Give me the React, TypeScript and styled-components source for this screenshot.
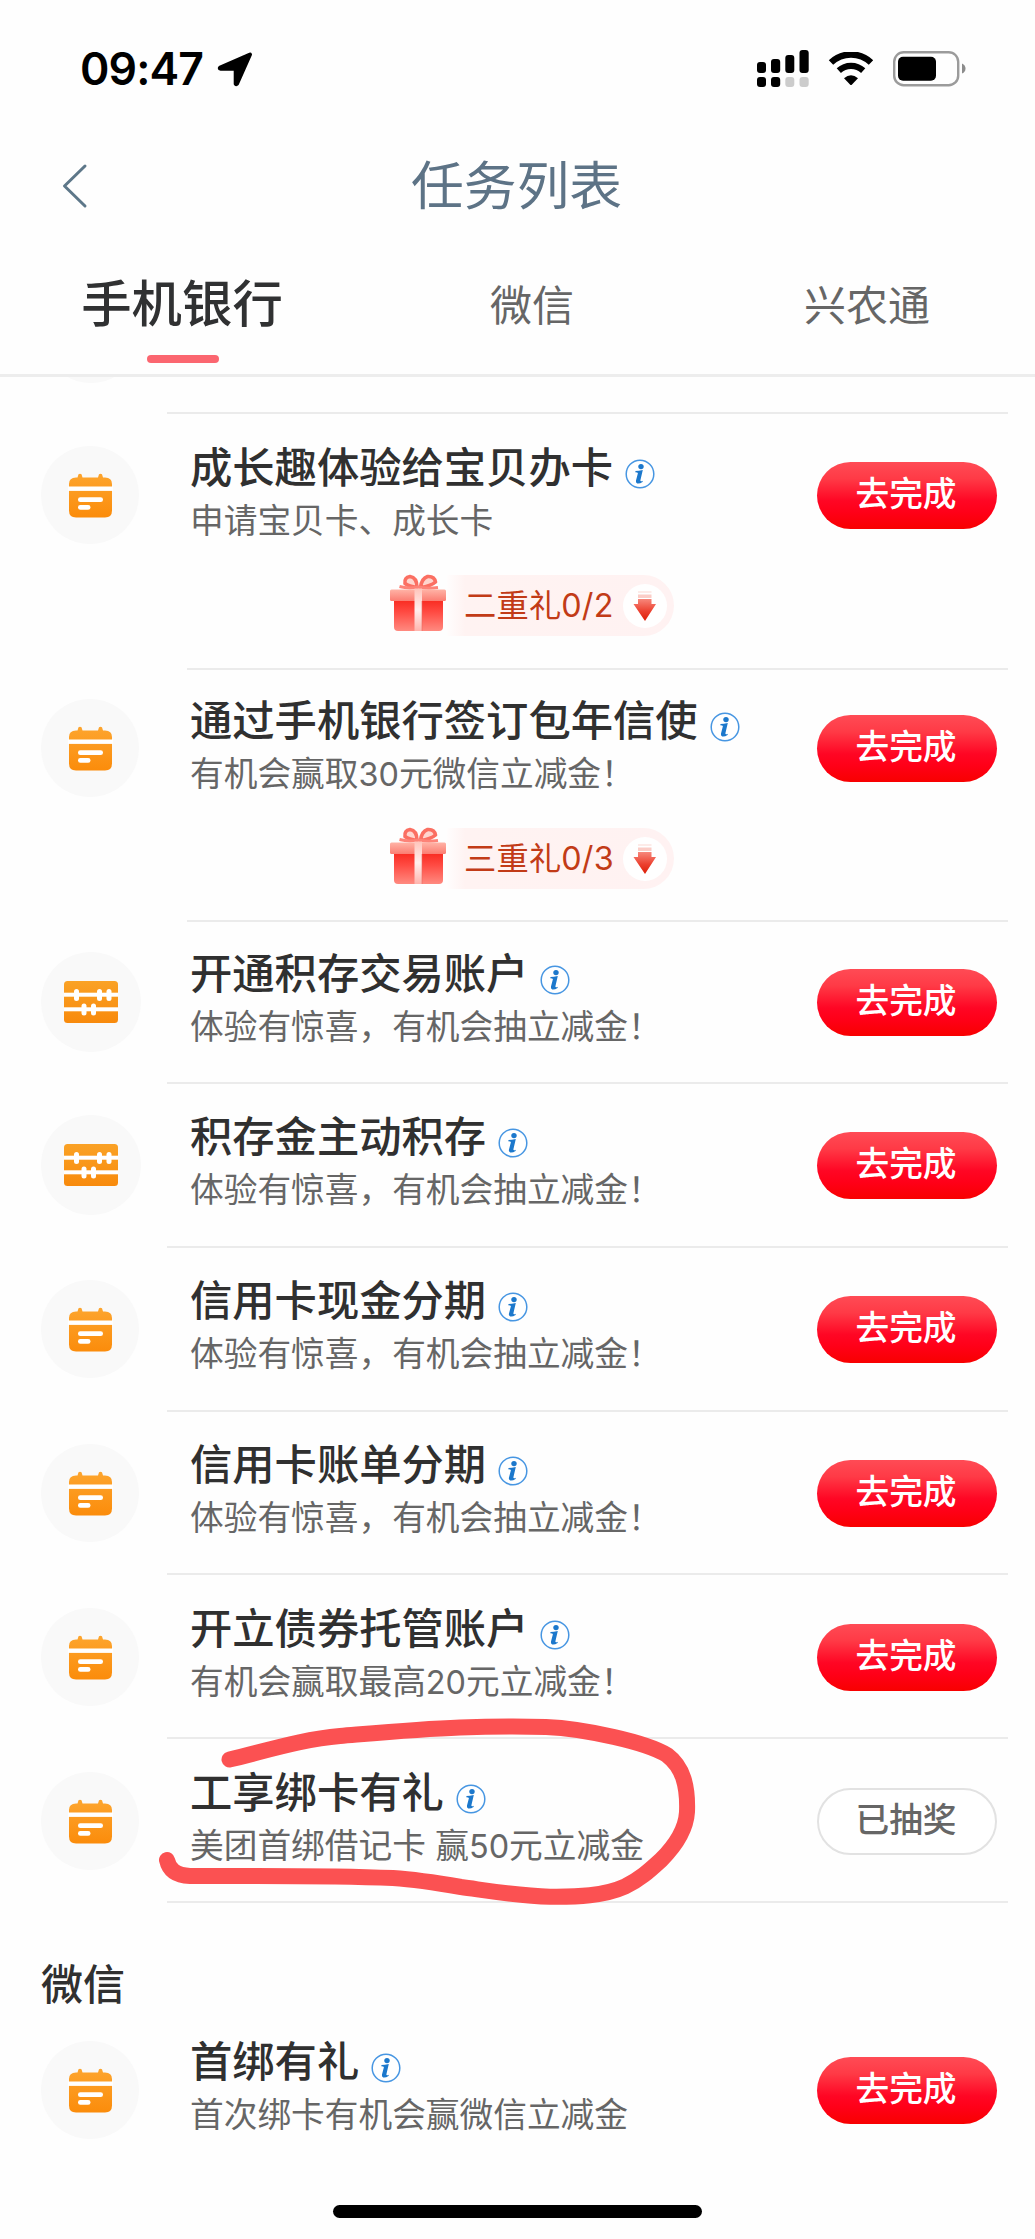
import React from "react";
import styled, { createGlobalStyle } from "styled-components";

const GlobalStyle = createGlobalStyle`
  * { box-sizing: border-box; }
  body {
    margin: 0;
    background: #fefefe;
    font-family: Inter, "Noto Sans CJK SC", sans-serif;
    -webkit-font-smoothing: antialiased;
  }
`;

const Screen = styled.div`
  width: 1035px;
  height: 2239px;
  display: flex;
  flex-direction: column;
  background: #fefefe;
  overflow: hidden;
`;

const StatusBar = styled.header`
  height: 136px;
  display: flex;
  justify-content: space-between;
  padding: 0 69px 0 80px;
`;

const StatusLeft = styled.div`
  display: flex;
  align-items: center;
  height: 138px;
  gap: 14px;
`;

const Clock = styled.span`
  font-size: 44.6px;
  font-weight: 600;
  line-height: 54px;
  letter-spacing: -0.9px;
  color: #000;
`;

const StatusRight = styled.div`
  display: flex;
  align-items: center;
  height: 138px;
`;

const NavBar = styled.nav`
  height: 100px;
  display: grid;
  grid-template-columns: 120px 1fr 120px;
  align-items: center;
`;

const BackButton = styled.button`
  border: 0;
  background: none;
  padding: 0 0 0 62px;
  height: 46px;
  display: flex;
`;

const NavTitle = styled.h1`
  margin: 0;
  padding-right: 2px;
  text-align: center;
  font-size: 52.8px;
  line-height: 70px;
  font-weight: 400;
  color: #5d7386;
`;

const Tabs = styled.div`
  height: 138px;
  flex: none;
  display: grid;
  grid-template-columns: 202px 1fr 126px;
  padding: 31px 105px 0 81px;
`;

const Tab = styled.div<{ $active?: boolean; $nudge?: number }>`
  display: flex;
  flex-direction: column;
  align-items: center;
  padding-right: ${(p) => p.$nudge ?? 0}px;
  white-space: nowrap;
  font-size: ${(p) => (p.$active ? 50.4 : 42)}px;
  font-weight: ${(p) => (p.$active ? 500 : 400)};
  line-height: ${(p) => (p.$active ? 74 : 77)}px;
  color: ${(p) => (p.$active ? "#303132" : "#666")};
`;

const TabMark = styled.span`
  width: 72px;
  height: 8px;
  margin: 14px 0 0 2px;
  border-radius: 4px;
  background: #fb6670;
`;

const List = styled.main`
  border-top: 3px solid #ededed;
  display: flex;
  flex-direction: column;
`;

const ScrolledRow = styled.div`
  height: 35px;
  padding-left: 42px;
  overflow: hidden;
  display: flex;
  align-items: flex-start;
`;

const IconDisc = styled.div<{ $size: number }>`
  width: ${(p) => p.$size}px;
  height: ${(p) => p.$size}px;
  flex: none;
  border-radius: 50%;
  background: #f9f9f9;
  display: flex;
  align-items: center;
  justify-content: center;
`;

const ScrolledDisc = styled(IconDisc)`
  margin-top: -92px;
`;

const Divider = styled.hr<{ $inset: number }>`
  width: ${(p) => 1008 - p.$inset}px;
  height: 2px;
  margin: 0 0 0 ${(p) => p.$inset}px;
  border: 0;
  flex: none;
  background: #ebebeb;
`;

const Row = styled.section<{ $height: number; $lead: number }>`
  position: relative;
  height: ${(p) => p.$height}px;
  padding: ${(p) => p.$lead}px 38px 0 41px;
  display: flex;
  flex-direction: column;
`;

const RowMain = styled.div<{ $shift: number }>`
  height: 112px;
  display: grid;
  grid-template-columns: 149px 1fr 180px;
  align-items: start;
  & > :first-child,
  & > :last-child {
    align-self: center;
    margin-top: ${(p) => p.$shift}px;
  }
`;

const Copy = styled.div`
  display: flex;
  flex-direction: column;
  white-space: nowrap;
`;

const TitleLine = styled.div`
  height: 56px;
  display: flex;
  align-items: center;
  gap: 12px;
  svg {
    margin-top: 13px;
  }
`;

const Title = styled.h2`
  margin: 0;
  padding-top: 1px;
  font-size: 42.3px;
  line-height: 56px;
  font-weight: 500;
  color: #303030;
`;

const Subtitle = styled.p`
  margin: 0;
  font-size: 33.7px;
  line-height: 52px;
  color: #666;
`;

const Digits = styled.span`
  font-size: 32.4px;
`;

const Action = styled.button<{ $done?: boolean }>`
  width: 180px;
  height: 67px;
  padding: 0 2px 2px 0;
  border-radius: 34px;
  font-family: inherit;
  font-size: 33.7px;
  line-height: 50px;
  font-weight: 500;
  color: ${(p) => (p.$done ? "#666" : "#fff")};
  border: ${(p) => (p.$done ? "2.5px solid #e2e2e2" : "0")};
  background: ${(p) =>
    p.$done
      ? "#fff"
      : "linear-gradient(180deg, #ff4b55 0%, #ff3a46 25%, #ff0624 58%, #ff0018 75%, #f80000 100%)"};
`;

const GiftPill = styled.div`
  margin: 24px 0 0 348px;
  width: 285px;
  height: 61px;
  display: flex;
  align-items: center;
  svg {
    flex: none;
  }
`;

const GiftSvg = styled.svg`
  margin-top: -3px;
`;

const PillBody = styled.div`
  height: 61px;
  flex: 1;
  display: flex;
  align-items: center;
  justify-content: space-between;
  padding: 0 7px 0 17px;
  border-radius: 0 31px 31px 0;
  background: linear-gradient(90deg, #fffdfd 0, #fff3f2 18px, #fff2f2 100%);
`;

const PillText = styled.span`
  font-size: 32.3px;
  line-height: 60px;
  letter-spacing: 0.15px;
  white-space: nowrap;
  color: #c23b17;
`;

const ArrowDisc = styled.span`
  width: 44px;
  height: 44px;
  border-radius: 50%;
  background: #fff;
  display: flex;
  align-items: center;
  justify-content: center;
`;

const Marker = styled.svg`
  position: absolute;
  left: 150px;
  top: -34px;
  pointer-events: none;
  z-index: 2;
`;

const SectionTitle = styled.h3`
  margin: 0;
  height: 106px;
  padding: 51px 0 0 41px;
  font-size: 42px;
  line-height: 62px;
  font-weight: 500;
  color: #303030;
`;

const HomeIndicator = styled.div`
  width: 369px;
  height: 13px;
  margin: auto auto 21px 333px;
  border-radius: 7px;
  background: #000;
`;

const LocationIcon = () => (
  <svg width="36" height="36" viewBox="0 0 36 36">
    <path
      d="M33 3.500 20 32.800Q19.300 33.600 18.700 32.800V17.700H3.500Q2.200 17.300 3.200 16.500Z"
      fill="#000"
      stroke="#000"
      strokeWidth="4"
      strokeLinejoin="round"
    />
  </svg>
);

const SignalIcon = () => (
  <svg width="53" height="38" viewBox="0 0 53 38">
    <rect x="0" y="12" width="9" height="11" rx="3" />
    <rect x="14" y="9" width="9.200" height="14" rx="3" />
    <rect x="28.300" y="5" width="9" height="18" rx="3" />
    <rect x="42.500" y="0" width="9.200" height="23" rx="3" />
    <rect x="0" y="27" width="9" height="10" rx="3" />
    <rect x="14" y="27" width="9.200" height="10" rx="3" />
    <rect x="28.300" y="27" width="9" height="10" rx="3" fill="#ccc" />
    <rect x="42.500" y="27" width="9.200" height="10" rx="3" fill="#ccc" />
  </svg>
);

const WifiSvg = styled.svg`
  margin-left: 18px;
`;

const WifiIcon = () => (
  <WifiSvg width="46" height="34" viewBox="0 0 46 34">
    <path d="M3 10.500a29 29 0 0 1 40 0" fill="none" stroke="#000" strokeWidth="6.400" />
    <path d="M10.800 18.600a18 18 0 0 1 24.400 0" fill="none" stroke="#000" strokeWidth="6.200" />
    <path d="M16 26.200Q23 20.300 30 26.200L24 32.600Q23 33.600 22 32.600Z" />
  </WifiSvg>
);

const BatterySvg = styled.svg`
  margin-left: 19px;
`;

const BatteryIcon = () => (
  <BatterySvg width="73" height="36" viewBox="0 0 73 36">
    <rect x="1.200" y="1.200" width="64" height="33" rx="9.500" fill="none" stroke="#9b9b9b" strokeWidth="2.400" />
    <rect x="5" y="5.700" width="38" height="24" rx="5" />
    <path d="M69 12.500q3.500 1.500 3.500 5t-3.500 5Z" fill="#8c8c8c" />
  </BatterySvg>
);

const CalendarIcon = () => (
  <svg width="45" height="45" viewBox="0 0 45 45">
    <defs>
      <linearGradient id="cal" x1="0" y1="0" x2="0" y2="1">
        <stop offset="0" stopColor="#fda52e" />
        <stop offset="1" stopColor="#fb8c0b" />
      </linearGradient>
    </defs>
    <path
      d="M9.500 4.500 10.500 1.300Q12 0 13.500 1.300L14.500 4.500H30L31 1.300Q32.500 0 34 1.300L35 4.500H37Q44 4.500 44 11V37.500Q44 44.500 37 44.500H8Q1 44.500 1 37.500V11Q1 4.500 8 4.500Z"
      fill="url(#cal)"
    />
    <rect x="0" y="13.500" width="45" height="4.400" fill="#fff" />
    <rect x="10" y="24.300" width="25" height="4.700" rx="2.300" fill="#fff" />
    <rect x="10" y="32" width="12.500" height="4.700" rx="2.300" fill="#fff" />
  </svg>
);

const AbacusIcon = () => (
  <svg width="54" height="42" viewBox="0 0 54 42">
    <defs>
      <linearGradient id="aba" x1="0" y1="0" x2="0" y2="1">
        <stop offset="0" stopColor="#faa226" />
        <stop offset="1" stopColor="#f88a0c" />
      </linearGradient>
    </defs>
    <rect width="54" height="42" rx="3.500" fill="url(#aba)" />
    <g fill="#fff">
      <rect y="11.700" width="54" height="4" />
      <rect y="26.300" width="54" height="4" />
      <rect x="10" y="8" width="5" height="12" rx="2.500" />
      <rect x="33" y="8" width="5" height="12" rx="2.500" />
      <rect x="42.500" y="8" width="5" height="12" rx="2.500" />
      <rect x="17.500" y="22.500" width="5" height="12" rx="2.500" />
      <rect x="27" y="22.500" width="5" height="12" rx="2.500" />
    </g>
  </svg>
);

const InfoIcon = () => (
  <svg width="30" height="30" viewBox="0 0 30 30">
    <circle cx="15" cy="15" r="13.800" fill="#fff" stroke="#4796e2" strokeWidth="1.500" />
    <circle cx="16" cy="7.600" r="2.700" fill="#1c78cc" />
    <path
      d="M10.500 12Q13.500 12 17.800 11L15.400 21.300Q15.200 22.900 17.900 21.700L17.500 23Q14.600 24.900 12.200 24.400Q10.400 23.800 11 21.500L12.900 14.300Q12.900 13.300 10.300 13.300Z"
      fill="#1c78cc"
    />
  </svg>
);

const GiftIcon = () => (
  <GiftSvg width="58" height="60" viewBox="0 0 58 60">
    <defs>
      <linearGradient id="box" x1="0" y1="0" x2="0" y2="1">
        <stop offset="0" stopColor="#f8281e" />
        <stop offset="0.400" stopColor="#ff4a42" />
        <stop offset="1" stopColor="#ff8a80" />
      </linearGradient>
      <linearGradient id="lid" x1="0" y1="0" x2="0" y2="1">
        <stop offset="0" stopColor="#ffb3a6" />
        <stop offset="1" stopColor="#fb7d72" />
      </linearGradient>
      <linearGradient id="band" x1="0" y1="0" x2="0" y2="1">
        <stop offset="0" stopColor="#ffc4bb" />
        <stop offset="0.500" stopColor="#fff0ee" />
        <stop offset="1" stopColor="#ffb4ad" />
      </linearGradient>
    </defs>
    <g fill="#ffd5ce" stroke="#fb6f62" strokeWidth="3.600" strokeLinejoin="round">
      <path d="M28 13.500Q20 12.500 16 9.500Q15 3.500 21 2.500Q28 3.500 28 13.500Z" />
      <path d="M31.500 13.500Q32.500 4.500 38.500 2.500Q45.500 2 46.500 8Q42 12 31.500 13.500Z" />
    </g>
    <path d="M10.500 12.500Q20 15 29 13Q38 15 49 13.500" fill="none" stroke="#fd8378" strokeWidth="3" />
    <path d="M5 25H54V53Q54 57 50 57H9Q5 57 5 53Z" fill="url(#box)" />
    <rect x="1" y="15.500" width="56" height="11.500" rx="1.500" fill="url(#lid)" />
    <rect x="25.500" y="14.500" width="7.500" height="42.500" fill="url(#band)" />
    <rect x="32.500" y="27" width="1" height="30" fill="#e8675f" opacity=".6" />
  </GiftSvg>
);

const DownArrowIcon = () => (
  <svg width="24" height="32" viewBox="0 0 24 32">
    <defs>
      <linearGradient id="down" x1="0" y1="0" x2="0" y2="1">
        <stop offset="0" stopColor="#f7877b" />
        <stop offset="0.550" stopColor="#ec4130" />
        <stop offset="1" stopColor="#dc1e07" />
      </linearGradient>
    </defs>
    <rect x="5" y="1" width="13.500" height="2" fill="#fdebe8" />
    <rect x="5" y="4.500" width="13.500" height="3.500" fill="#fbcdc7" />
    <path d="M5 9H18.500V14H23L12 31 .5 14H5Z" fill="url(#down)" />
  </svg>
);

const HandMarker = () => (
  <Marker width="560" height="210" viewBox="150 1705 560 210">
    <path
      d="M229.500 1759.500C262 1752 303 1739 340 1736C382 1732.500 420 1729 460 1727.500C490 1726.500 525 1726.500 546 1727C570 1728 592 1732 614 1737C636 1742 654 1747 667 1755C683 1767 688 1786 687 1812C686 1829 675 1846 661 1860C649 1871 639 1880 625 1886.500C604 1896 577 1897 550 1896.700C518 1896 490 1891 461 1887C438 1883 416 1879.500 393 1878C325 1875 260 1876 190 1876C175 1875.500 169 1869 167 1860"
      fill="none"
      stroke="#fb5152"
      strokeWidth="16"
      strokeLinecap="round"
      strokeLinejoin="round"
    />
  </Marker>
);

type Task = {
  title: string;
  sub: React.ReactNode;
  height: number;
  lead: number;
  abacus?: boolean;
  gift?: string;
  done?: boolean;
  marked?: boolean;
  inset?: number;
};

const draw = "体验有惊喜，有机会抽立减金！";

const tasks: Task[] = [
  { title: "成长趣体验给宝贝办卡", sub: "申请宝贝卡、成长卡", height: 254, lead: 25, gift: "二重礼0/2", inset: 187 },
  {
    title: "通过手机银行签订包年信使",
    sub: <>有机会赢取<Digits>30</Digits>元微信立减金！</>,
    height: 250,
    lead: 22,
    gift: "三重礼0/3",
    inset: 187,
  },
  { title: "开通积存交易账户", sub: draw, height: 160, lead: 23, abacus: true, inset: 167 },
  { title: "积存金主动积存", sub: draw, height: 162, lead: 24, abacus: true, inset: 167 },
  { title: "信用卡现金分期", sub: draw, height: 162, lead: 24, inset: 167 },
  { title: "信用卡账单分期", sub: draw, height: 161, lead: 24, inset: 167 },
  {
    title: "开立债券托管账户",
    sub: <>有机会赢取最高<Digits>20</Digits>元立减金！</>,
    height: 162,
    lead: 25,
    inset: 167,
  },
  {
    title: "工享绑卡有礼",
    sub: <>美团首绑借记卡 赢<Digits>50</Digits>元立减金</>,
    height: 162,
    lead: 25,
    done: true,
    marked: true,
    inset: 167,
  },
];

const TaskRow = ({ task }: { task: Task }) => (
  <>
    <Row $height={task.height} $lead={task.lead}>
      <RowMain $shift={task.gift ? 0 : 2}>
        <IconDisc $size={task.abacus ? 100 : 98}>
          {task.abacus ? <AbacusIcon /> : <CalendarIcon />}
        </IconDisc>
        <Copy>
          <TitleLine>
            <Title>{task.title}</Title>
            <InfoIcon />
          </TitleLine>
          <Subtitle>{task.sub}</Subtitle>
        </Copy>
        <Action $done={task.done}>{task.done ? "已抽奖" : "去完成"}</Action>
      </RowMain>
      {task.gift && (
        <GiftPill>
          <GiftIcon />
          <PillBody>
            <PillText>{task.gift}</PillText>
            <ArrowDisc>
              <DownArrowIcon />
            </ArrowDisc>
          </PillBody>
        </GiftPill>
      )}
      {task.marked && <HandMarker />}
    </Row>
    {task.inset && <Divider $inset={task.inset} />}
  </>
);

export default function App() {
  return (
    <>
      <GlobalStyle />
      <Screen>
        <StatusBar>
          <StatusLeft>
            <Clock>09:47</Clock>
            <LocationIcon />
          </StatusLeft>
          <StatusRight>
            <SignalIcon />
            <WifiIcon />
            <BatteryIcon />
          </StatusRight>
        </StatusBar>
        <NavBar>
          <BackButton aria-label="返回">
            <svg width="26" height="46" viewBox="0 0 26 46">
              <path
                d="M23 3 2.500 23 23 43"
                fill="none"
                stroke="#5d7789"
                strokeWidth="3"
                strokeLinecap="round"
                strokeLinejoin="round"
              />
            </svg>
          </BackButton>
          <NavTitle>任务列表</NavTitle>
        </NavBar>
        <Tabs>
          <Tab $active>
            手机银行
            <TabMark />
          </Tab>
          <Tab $nudge={23}>微信</Tab>
          <Tab>兴农通</Tab>
        </Tabs>
        <List>
          <ScrolledRow>
            <ScrolledDisc $size={98} />
          </ScrolledRow>
          <Divider $inset={167} />
          {tasks.map((t) => (
            <TaskRow key={t.title} task={t} />
          ))}
          <SectionTitle>微信</SectionTitle>
          <TaskRow
            task={{ title: "首绑有礼", sub: "首次绑卡有机会赢微信立减金", height: 160, lead: 24 }}
          />
        </List>
        <HomeIndicator />
      </Screen>
    </>
  );
}
